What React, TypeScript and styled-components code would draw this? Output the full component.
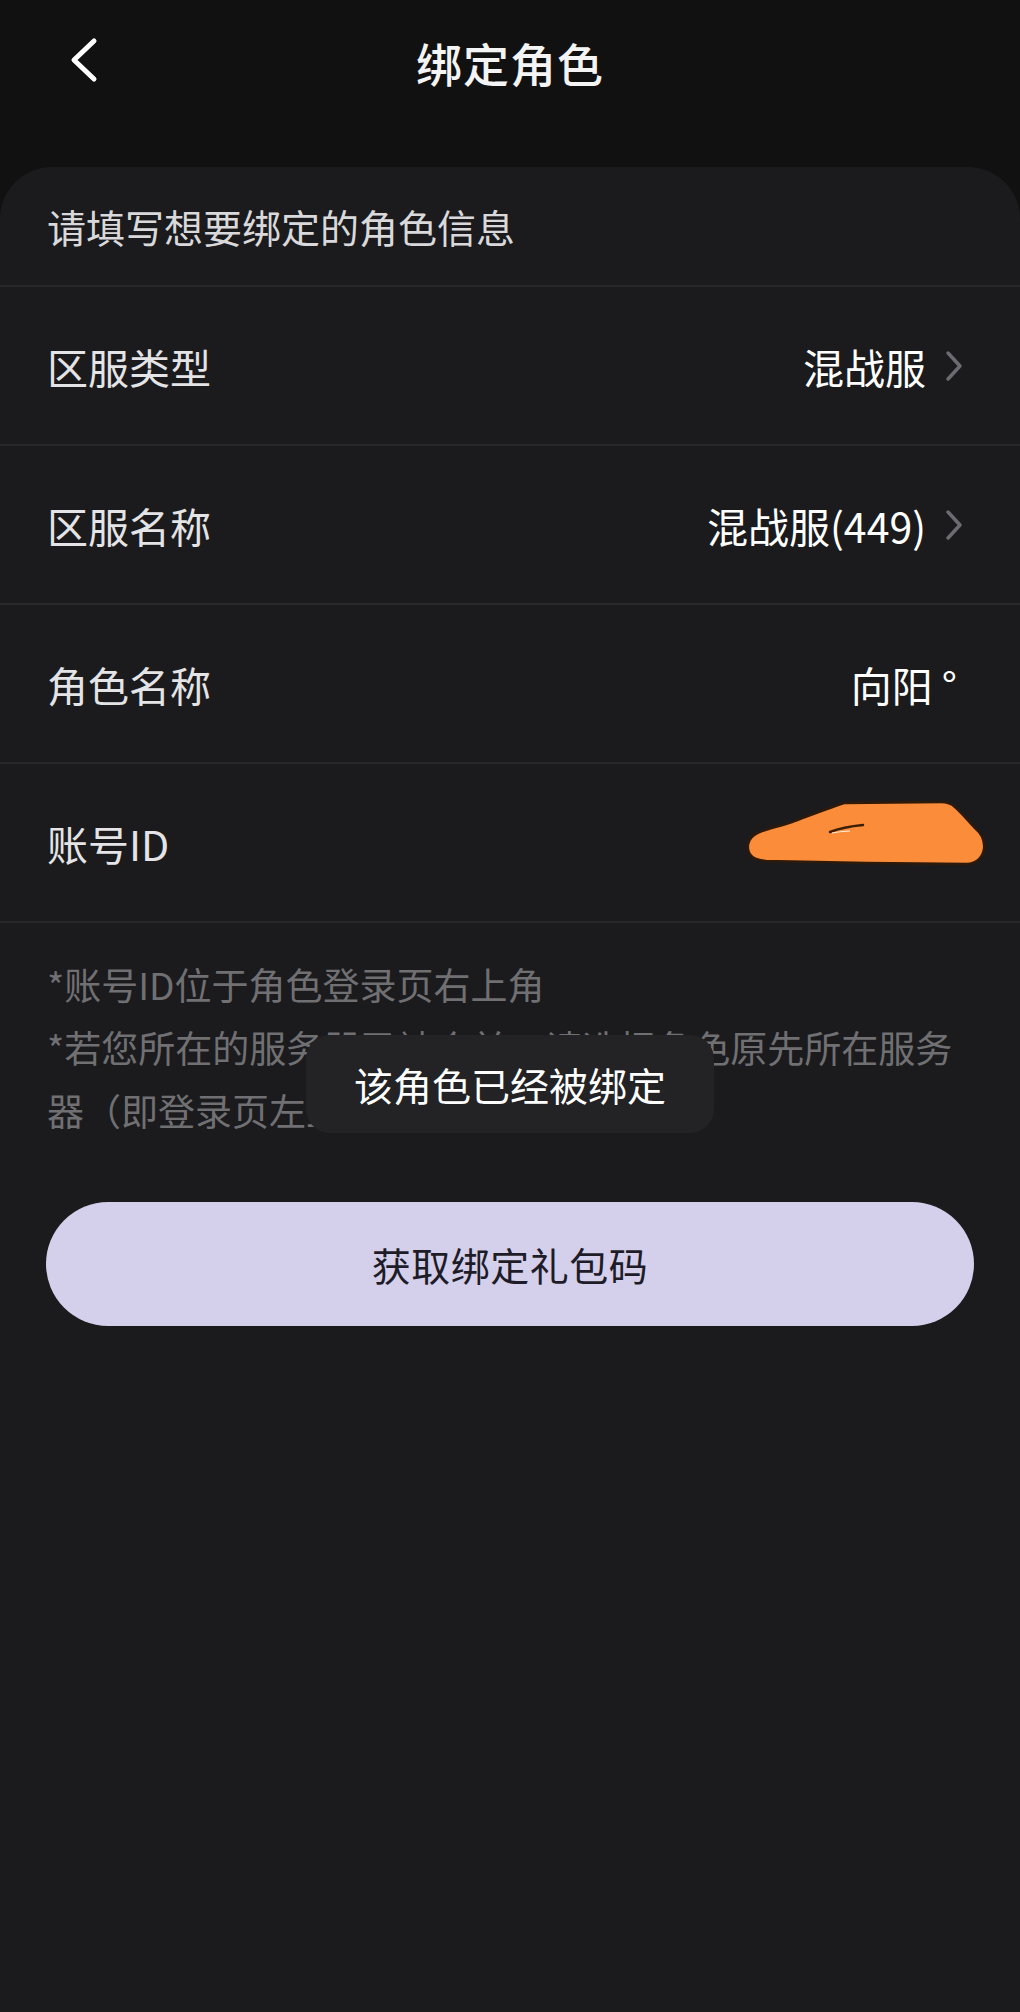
import styled, { createGlobalStyle } from 'styled-components'

const GlobalStyle = createGlobalStyle`
  html, body {
    margin: 0;
    padding: 0;
    background: #111112;
  }
  body {
    font-family: 'Noto Sans CJK SC', 'Noto Sans', sans-serif;
    -webkit-font-smoothing: antialiased;
  }
`

const Page = styled.div`
  min-height: 100vh;
  display: flex;
  flex-direction: column;
  background: #111112;
`

const NavBar = styled.div`
  height: 124px;
  display: flex;
  align-items: center;
  justify-content: center;
  position: relative;
  margin-bottom: 43px;
`

const BackButton = styled.div`
  position: absolute;
  left: 64px;
  top: 34px;
  width: 40px;
  height: 52px;
  display: flex;
  align-items: center;
  justify-content: center;
`

const Title = styled.h1`
  margin: 0;
  font-size: 46px;
  font-weight: 500;
  color: #f4f4f5;
  letter-spacing: 1px;
`

const Card = styled.div`
  flex: 1;
  background: #1b1b1d;
  border-radius: 52px 52px 0 0;
  position: relative;
`

const Intro = styled.div`
  height: 118px;
  display: flex;
  align-items: center;
  padding: 0 47px;
  font-size: 39px;
  color: #d9d9db;
  border-bottom: 2px solid #28282a;
`

const Row = styled.div`
  height: 157px;
  display: flex;
  align-items: center;
  justify-content: space-between;
  padding: 0 57px 0 47px;
  border-bottom: 2px solid #28282a;
`

const Label = styled.span`
  font-size: 41px;
  color: #e4e4e6;
`

const ValueGroup = styled.div<{ $tail?: number }>`
  display: flex;
  align-items: center;
  gap: 19px;
  margin-right: ${(p) => p.$tail ?? 0}px;
`

const Value = styled.span`
  font-size: 41px;
  color: #ffffff;
`

const Notes = styled.div`
  padding: 30px 50px 0 47px;
  font-size: 37px;
  line-height: 63px;
  color: #707073;
`

const NoteLine = styled.p`
  margin: 0;
`

const SubmitButton = styled.button`
  display: flex;
  align-items: center;
  justify-content: center;
  width: calc(100% - 92px);
  height: 124px;
  margin: 60px 46px 0;
  border: none;
  border-radius: 62px;
  background: #d4cfeb;
  color: #1d1c27;
  font-family: inherit;
  font-size: 39px;
  letter-spacing: 0.5px;
`

const Toast = styled.div`
  position: absolute;
  left: 50%;
  top: 868px;
  transform: translateX(-50%);
  width: 408px;
  height: 98px;
  border-radius: 24px;
  background: #232325;
  display: flex;
  align-items: center;
  justify-content: center;
  font-size: 39px;
  color: #ffffff;
`

const ScribbleBox = styled.div`
  display: flex;
  margin: 0 -25px 18px 0;
`

const BackIcon = () => (
  <svg width="32" height="46" viewBox="0 0 32 46">
    <path
      d="M26 4 L6 23 L26 42"
      fill="none"
      stroke="#ffffff"
      strokeWidth="5"
      strokeLinecap="round"
      strokeLinejoin="round"
    />
  </svg>
)

const Chevron = () => (
  <svg width="18" height="32" viewBox="0 0 18 32">
    <path
      d="M3 3 L15 16 L3 29"
      fill="none"
      stroke="#6c6b71"
      strokeWidth="3.5"
      strokeLinecap="round"
      strokeLinejoin="round"
    />
  </svg>
)

// 打码的涂抹
const Scribble = () => (
  <ScribbleBox>
    <svg width="242" height="66" viewBox="0 0 242 66">
      <path
        d="M16 30 C5 34 1 40 2 48 C3 56 9 59 20 60 L120 62 L222 63 C231 62 237 56 238 48 C239 40 235 32 229 27 C223 21 217 13 209 6 C205 2 200 1 195 1 L98 2 C80 8 62 15 46 21 C34 25 24 27 16 30 Z"
        fill="#fb8c3a"
        stroke="#2e1a0a"
        strokeWidth="2.5"
        strokeLinejoin="round"
      />
      <path
        d="M84 31 C94 27 106 25 117 24"
        fill="none"
        stroke="#3a1e08"
        strokeWidth="2.5"
        strokeLinecap="round"
      />
      <path d="M86 32 C92 31 98 30 104 30" fill="none" stroke="#fff2e4" strokeWidth="1.2" />
    </svg>
  </ScribbleBox>
)

const rows = [
  { label: '区服类型', value: '混战服', arrow: true },
  { label: '区服名称', value: '混战服(449)', arrow: true },
  { label: '角色名称', value: '向阳 °', arrow: false },
]

export default function App() {
  return (
    <Page>
      <GlobalStyle />
      <NavBar>
        <BackButton>
          <BackIcon />
        </BackButton>
        <Title>绑定角色</Title>
      </NavBar>
      <Card>
        <Intro>请填写想要绑定的角色信息</Intro>
        {rows.map((r) => (
          <Row key={r.label}>
            <Label>{r.label}</Label>
            <ValueGroup $tail={r.arrow ? 0 : 6}>
              <Value>{r.value}</Value>
              {r.arrow && <Chevron />}
            </ValueGroup>
          </Row>
        ))}
        <Row>
          <Label>账号ID</Label>
          <Scribble />
        </Row>
        <Notes>
          <NoteLine>*账号ID位于角色登录页右上角</NoteLine>
          <NoteLine>
            *若您所在的服务器已被合并，请选择角色原先所在服务器（即登录页左上角显示的服务器）
          </NoteLine>
        </Notes>
        <SubmitButton>获取绑定礼包码</SubmitButton>
        <Toast>该角色已经被绑定</Toast>
      </Card>
    </Page>
  )
}
